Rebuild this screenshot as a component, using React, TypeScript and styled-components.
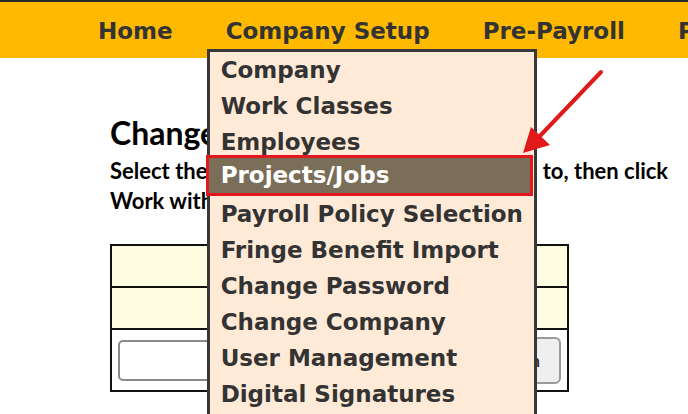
import React from 'react';
import styled, { createGlobalStyle } from 'styled-components';

const GlobalStyle = createGlobalStyle`
  html, body {
    margin: 0;
    padding: 0;
    background: #ffffff;
    overflow: hidden;
  }
`;

const navItems = ['Home', 'Company Setup', 'Pre-Payroll', 'Payroll'];

const setupItems = [
  'Company',
  'Work Classes',
  'Employees',
  'Projects/Jobs',
  'Payroll Policy Selection',
  'Fringe Benefit Import',
  'Change Password',
  'Change Company',
  'User Management',
  'Digital Signatures',
];

const App = () => {
  return (
    <Frame>
      <GlobalStyle />
      <NavBar>
        {navItems.map((item) => (
          <NavItem key={item}>
            {item}
            {item === 'Company Setup' && (
              <Dropdown>
                {setupItems.map((sub) => (
                  <MenuItem key={sub} $active={sub === 'Projects/Jobs'}>
                    {sub}
                  </MenuItem>
                ))}
              </Dropdown>
            )}
          </NavItem>
        ))}
      </NavBar>
      <Content>
        <Title>Change Company</Title>
        <Intro>
          Select the company you would like to move  to, then click
          <br />
          Work with Company
        </Intro>
        <CompanyTable>
          <TableRow $tint>ABC Construction</TableRow>
          <TableRow $tint>Westside Builders</TableRow>
          <ActionRow>
            <TextInput />
            <ActionButton>Login</ActionButton>
          </ActionRow>
        </CompanyTable>
      </Content>
      <Arrow width="688" height="414" viewBox="0 0 688 414">
        <line x1="601" y1="72" x2="538" y2="138" stroke="#e0191b" strokeWidth="4" strokeLinecap="round" />
        <polygon points="523,153 531,127 550,145" fill="#e0191b" />
      </Arrow>
    </Frame>
  );
};

const Frame = styled.div`
  position: relative;
  width: 688px;
  height: 414px;
  overflow: hidden;
  background: #ffffff;
`;

const NavBar = styled.div`
  display: flex;
  align-items: center;
  gap: 53px;
  height: 56px;
  padding-left: 98px;
  background-color: #ffb900;
  border-top: 2px solid #2a2a2a;
  white-space: nowrap;
`;

const NavItem = styled.div`
  position: relative;
  font-family: 'DejaVu Sans', Verdana, sans-serif;
  font-weight: bold;
  font-size: 23px;
  color: #333333;
  line-height: 56px;
  padding-top: 1px;
`;

const Dropdown = styled.div`
  position: absolute;
  top: 47px;
  left: -19px;
  width: 324px;
  padding: 0 0 12px;
  background-color: #ffead7;
  border: 3px solid #383838;
  z-index: 2;
`;

const MenuItem = styled.div<{ $active?: boolean }>`
  box-sizing: border-box;
  height: ${(p) => (p.$active ? '41px' : '36px')};
  margin: ${(p) => (p.$active ? '-5px 1px 0 -4px' : '0')};
  padding-left: ${(p) => (p.$active ? '12px' : '11px')};
  line-height: ${(p) => (p.$active ? '35px' : '36px')};
  font-size: 23px;
  color: ${(p) => (p.$active ? '#ffffff' : '#333333')};
  background-color: ${(p) => (p.$active ? '#7a6e58' : 'transparent')};
  border: ${(p) => (p.$active ? '3px solid #e3171d' : 'none')};
`;

const Content = styled.div`
  padding: 56px 0 0 110px;
  font-family: Lato, 'Open Sans', sans-serif;
  color: #000000;
`;

const Title = styled.h1`
  margin: 0;
  font-size: 32px;
  font-weight: bold;
  line-height: 38px;
`;

const Intro = styled.p`
  margin: 4px 0 0;
  font-size: 22px;
  font-weight: bold;
  line-height: 30px;
  white-space: pre;
`;

const CompanyTable = styled.div`
  margin-top: 28px;
  width: 455px;
  border: 2px solid #111111;
`;

const TableRow = styled.div<{ $tint?: boolean }>`
  height: 40px;
  background-color: ${(p) => (p.$tint ? '#fffde1' : '#ffffff')};
  border-bottom: 2px solid #111111;
  color: transparent;
`;

const ActionRow = styled.div`
  display: flex;
  align-items: center;
  gap: 12px;
  height: 60px;
  padding: 0 6px;
`;

const TextInput = styled.div`
  flex: 1;
  height: 37px;
  border: 2px solid #8a8a8a;
  border-radius: 5px;
  background: #ffffff;
`;

const ActionButton = styled.div`
  display: flex;
  align-items: center;
  justify-content: flex-end;
  width: 90px;
  height: 47px;
  padding-right: 19px;
  box-sizing: border-box;
  border: 2px solid #9a9a9a;
  border-radius: 6px;
  background: #efefef;
  font-size: 18px;
  color: #111111;
`;

const Arrow = styled.svg`
  position: absolute;
  left: 0;
  top: 0;
  pointer-events: none;
  z-index: 3;
`;

export default App;
